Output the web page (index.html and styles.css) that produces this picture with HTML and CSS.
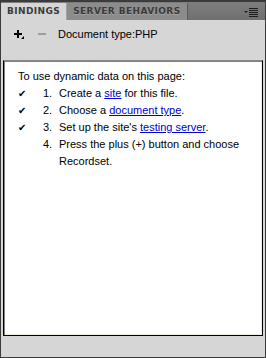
FILE: index.html
```html
<!DOCTYPE html>
<html lang="en">

<head>
    <meta charset="UTF-8">
    <title>Bindings</title>
    <link rel="stylesheet" href="styles.css">
</head>

<body>
    <div class="panel">
        <div class="tabs">
            <div class="tab active">BINDINGS</div>
            <div class="tab">SERVER BEHAVIORS</div>
            <div class="menu">
                <svg width="14" height="9" viewBox="0 0 14 9">
                    <polygon points="0,3 4,3 2,5" fill="#1c1c1c"/>
                    <rect x="5" y="0" width="9" height="1" fill="#1c1c1c"/>
                    <rect x="5" y="2" width="9" height="1" fill="#1c1c1c"/>
                    <rect x="5" y="4" width="9" height="1" fill="#1c1c1c"/>
                    <rect x="5" y="6" width="9" height="1" fill="#1c1c1c"/>
                    <rect x="5" y="8" width="9" height="1" fill="#1c1c1c"/>
                </svg>
            </div>
        </div>

        <div class="toolbar">
            <svg class="plus" width="12" height="10" viewBox="0 0 12 10">
                <rect x="3" y="0" width="2" height="8" fill="#000"/>
                <rect x="0" y="3" width="8" height="2" fill="#000"/>
                <polygon points="7,9 10,6 10,9" fill="#000"/>
            </svg>
            <svg class="minus" width="8" height="2" viewBox="0 0 8 2">
                <rect x="0" y="0" width="8" height="2" fill="#9c9c9c"/>
            </svg>
            <span class="doctype">Document type:PHP</span>
        </div>

        <div class="content">
            <p class="intro">To use dynamic data on this page:</p>
            <div class="steps">
                <span class="check">&#10004;</span><span class="num">1.</span>
                <span>Create a <a href="#">site</a> for this file.</span>

                <span class="check">&#10004;</span><span class="num">2.</span>
                <span>Choose a <a href="#">document type</a>.</span>

                <span class="check">&#10004;</span><span class="num">3.</span>
                <span>Set up the site's <a href="#">testing server</a>.</span>

                <span class="check"></span><span class="num">4.</span>
                <span>Press the plus (+) button and choose Recordset.</span>
            </div>
        </div>
    </div>
</body>

</html>
```

FILE: styles.css
```css
body {
    margin: 0;
    background-color: #3b3b3b;
}

.panel {
    width: 266px;
    height: 358px;
    box-sizing: border-box;
    border: 1px solid #3b3b3b;
    border-top-width: 2px;
    background-color: #d6d6d6;
    display: flex;
    flex-direction: column;
    font-family: "Liberation Sans", Arial, sans-serif;
    font-size: 11px;
}

.tabs {
    height: 18px;
    display: flex;
    background: linear-gradient(#7e7e7e, #6f6f6f);
}

.tab {
    padding: 0 6px;
    margin-top: 1px;
    line-height: 17px;
    font-family: "DejaVu Sans", Verdana, sans-serif;
    font-size: 9px;
    font-weight: bold;
    letter-spacing: 0.4px;
    color: #3a3a3a;
    text-shadow: 0 1px 0 #a4a4a4;
    background-color: #8c8c8c;
    border-left: 1px solid #a2a2a2;
    border-right: 1px solid #5c5c5c;
}

.tab.active {
    color: #3c3c3c;
    text-shadow: none;
    background-color: #d6d6d6;
    border: none;
}

.menu {
    margin-left: auto;
    padding: 5px 7px 0 0;
}

.toolbar {
    height: 32px;
    box-sizing: border-box;
    padding: 0 0 4px 13px;
    display: flex;
    align-items: center;
}

.plus {
    margin-top: 2px;
}

.minus {
    margin-left: 12px;
}

.doctype {
    margin-left: 12px;
    color: #000;
}

.content {
    flex: 1;
    margin: 8px 2px 21px 2px;
    padding: 7px 14px 0 14px;
    background-color: #fff;
    border: 1px solid #000;
    border-top-color: #8a8a8a;
    box-shadow: inset 1px 1px 0 #808080, inset -1px -1px 0 #ecebdc;
    line-height: 17px;
    color: #000;
}

.intro {
    margin: 0;
}

.steps {
    display: grid;
    grid-template-columns: 25px 16px 1fr;
}

.check {
    font-family: "DejaVu Sans", sans-serif;
    font-size: 10px;
}

.content a {
    color: #0000cc;
}
```
